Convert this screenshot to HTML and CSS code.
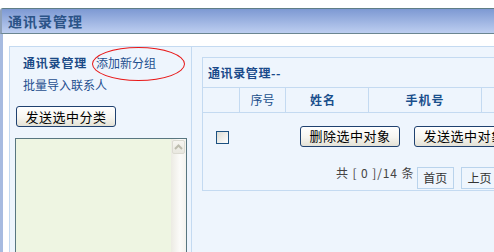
FILE: index.html
```html
<!DOCTYPE html>
<html lang="zh">
<head>
<meta charset="utf-8">
<title>通讯录管理</title>
<link rel="stylesheet" href="styles.css">
</head>
<body>
<div class="window">
  <div class="titlebar">通讯录管理</div>
  <div class="frame">
    <div class="content">
      <aside class="side">
        <div class="side-links">
          <div class="side-row"><b class="side-title">通讯录管理</b><a class="link">添加新分组</a></div>
          <div class="side-row"><a class="link">批量导入联系人</a></div>
        </div>
        <button class="btn btn-side">发送选中分类</button>
        <div class="listbox">
          <div class="scrollbar">
            <div class="scroll-up">
              <svg width="9" height="6" viewBox="0 0 9 6"><path d="M1 5 L4.5 1.5 L8 5" fill="none" stroke="#bdbcae" stroke-width="2"/></svg>
            </div>
          </div>
        </div>
      </aside>
      <main class="main">
        <section class="panel">
          <div class="panel-head">通讯录管理--</div>
          <div class="thead">
            <div class="th th-check"></div>
            <div class="th th-no">序号</div>
            <div class="th th-name">姓名</div>
            <div class="th th-phone">手机号</div>
            <div class="th th-more"></div>
          </div>
          <div class="action-row">
            <div class="cell-check"><span class="checkbox"></span></div>
            <div class="actions">
              <button class="btn">删除选中对象</button>
              <button class="btn">发送选中对象</button>
            </div>
          </div>
          <div class="pager">
            <span class="pager-info">共 [ 0 ]/14 条</span>
            <span class="page-box">首页</span>
            <span class="page-box">上页</span>
          </div>
        </section>
      </main>
    </div>
  </div>
  <div class="annotation"></div>
</div>
</body>
</html>
```
FILE: styles.css
```css
html, body {
  margin: 0;
  padding: 0;
  overflow: hidden;
  background: #ffffff;
}
body {
  font-family: "Noto Sans CJK SC", "DejaVu Sans", sans-serif;
  font-size: 12px;
  color: #222;
  height: 252px;
}
.window {
  position: relative;
  padding-top: 8px;
  width: 640px;
}
.titlebar {
  height: 24px;
  line-height: 24px;
  border-top: 1px solid #5f7e86;
  border-bottom: 1px solid #6b8690;
  border-left: 2px solid #8fa1b8;
  border-top-left-radius: 3px;
  background: linear-gradient(#7d99d3, #bdcef0);
  padding-left: 6px;
  font-size: 14px;
  font-weight: bold;
  letter-spacing: 1px;
  color: #2b5387;
}
.frame {
  border-left: 3px solid #a7bbe0;
  padding: 12px 0 0 6px;
  height: 240px;
}
.content {
  display: flex;
  border-top: 1px solid #c4daf1;
  border-left: 1px solid #c4daf1;
  background: #eef5fd;
  height: 220px;
}
.side {
  width: 182px;
  flex-shrink: 0;
  border-right: 1px solid #c4daf1;
  padding: 5px 0 0 6px;
  box-sizing: border-box;
}
.side-links {
  padding-left: 7px;
}
.side-row {
  line-height: 22px;
  height: 22px;
  white-space: nowrap;
}
.side-title {
  color: #1b4a86;
  font-weight: bold;
  letter-spacing: 0.8px;
  margin-right: 9px;
}
.link {
  color: #1f4f8f;
}
.btn {
  font-family: "Noto Sans CJK SC", "DejaVu Sans", sans-serif;
  font-size: 13px;
  color: #000;
  width: 100px;
  height: 21px;
  padding: 0;
  line-height: 18px;
  border: 1px solid #1f416f;
  border-radius: 3px;
  background: linear-gradient(#ffffff 0%, #f6f5f0 55%, #e3e1d6 100%);
  letter-spacing: 0.5px;
}
.btn-side {
  display: block;
  margin-top: 10px;
}
.listbox {
  margin: 11px 0 0 -1px;
  width: 172px;
  height: 130px;
  box-sizing: border-box;
  border: 1px solid #587680;
  background: #eef5e2;
  display: flex;
  justify-content: flex-end;
}
.scrollbar {
  width: 15px;
  background: linear-gradient(90deg, #ecebe3, #fbfbf9 60%, #f4f3ee);
  padding-top: 1px;
}
.scroll-up {
  width: 13px;
  height: 14px;
  margin-left: 1px;
  box-sizing: border-box;
  border: 1px solid #dcdbd2;
  border-radius: 2px;
  background: linear-gradient(#f6f5f0, #e9e8e0);
  display: flex;
  align-items: center;
  justify-content: center;
}
.main {
  padding: 10px 0 0 10px;
  flex-shrink: 0;
}
.panel {
  width: 330px;
  border: 1px solid #c4daf1;
  background: #eef5fd;
}
.panel-head {
  height: 29px;
  line-height: 29px;
  padding-left: 5px;
  font-weight: bold;
  letter-spacing: 0.6px;
  color: #1a4a8a;
  border-bottom: 1px solid #c4daf1;
}
.thead {
  display: flex;
  height: 24px;
  line-height: 24px;
  border-bottom: 1px solid #c4daf1;
  color: #1a4f8c;
}
.th {
  text-align: center;
  box-sizing: border-box;
}
.th-check { width: 36px; }
.th-no { width: 46px; border-left: 1px solid #c4daf1; }
.th-name { width: 83px; border-left: 1px solid #c4daf1; font-weight: bold; padding-right: 8px; letter-spacing: 1px; }
.th-phone { width: 113px; border-left: 1px solid #c4daf1; font-weight: bold; letter-spacing: 1px; }
.th-more { flex: 1; border-left: 1px solid #c4daf1; }
.action-row {
  display: flex;
  align-items: center;
  height: 48px;
}
.cell-check {
  width: 36px;
  display: flex;
  justify-content: center;
  padding-left: 2px;
  box-sizing: border-box;
}
.checkbox {
  display: block;
  width: 13px;
  height: 13px;
  box-sizing: border-box;
  border: 1px solid #1c5180;
  background: linear-gradient(135deg, #dcdcd4, #ffffff);
}
.actions {
  display: flex;
  gap: 14px;
  margin-left: 61px;
  margin-top: -2px;
}
.pager {
  display: flex;
  align-items: flex-start;
  height: 22px;
  padding: 6px 0 1px 133px;
  gap: 7px;
}
.pager-info {
  line-height: 14px;
  margin-top: -1px;
  color: #444;
  white-space: nowrap;
  letter-spacing: 0.9px;
  margin-right: -4px;
}
.page-box {
  height: 22px;
  line-height: 20px;
  box-sizing: border-box;
  border: 1px solid #b9d3ec;
  padding: 0 6px 0 5px;
  color: #333;
  white-space: nowrap;
}
.annotation {
  position: absolute;
  left: 92px;
  top: 47px;
  width: 93px;
  height: 34px;
  box-sizing: border-box;
  border: 1px solid #e81818;
  border-radius: 50%;
}
```
